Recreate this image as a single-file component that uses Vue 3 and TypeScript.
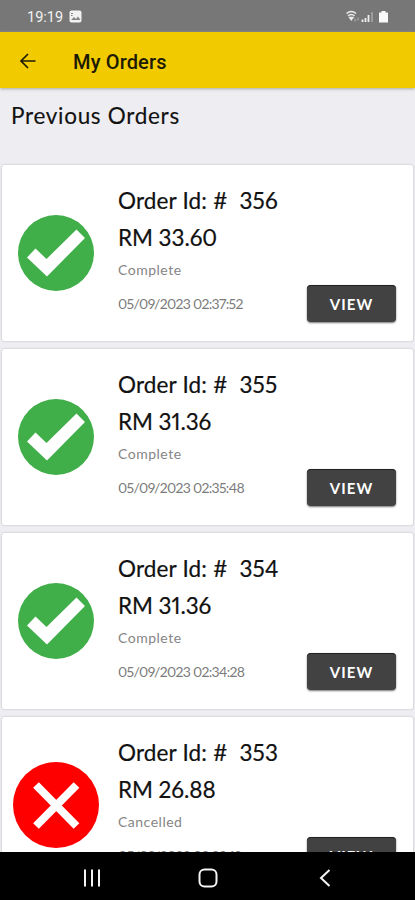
<script setup lang="ts">
interface Order {
  id: number
  total: string
  status: 'Complete' | 'Cancelled'
  date: string
}

const orders: Order[] = [
  { id: 356, total: '33.60', status: 'Complete', date: '05/09/2023 02:37:52' },
  { id: 355, total: '31.36', status: 'Complete', date: '05/09/2023 02:35:48' },
  { id: 354, total: '31.36', status: 'Complete', date: '05/09/2023 02:34:28' },
  { id: 353, total: '26.88', status: 'Cancelled', date: '05/09/2023 02:32:12' },
]
</script>

<template>
  <div class="screen">
    <div class="status">
      <span class="clock">19:19</span>
      <svg class="picture" width="13" height="13" viewBox="0 0 13 13">
        <rect x="0.5" y="0.5" width="12" height="12" rx="2" fill="#f2f2f2" />
        <path d="M2 10 5 7l2 2 2-2.500 2.500 3.500z" fill="#858585" />
        <path d="M2 3.500h2M2 5.500h1.500" stroke="#858585" />
      </svg>
      <svg class="signals" width="46" height="15" viewBox="0 0 46 15">
        <g fill="none" stroke="#ededed" stroke-width="1.400">
          <path d="M1.500 3.500q4.800-4 9.600 0M3 5.800q3.300-2.800 6.600 0" />
        </g>
        <path d="M3.300 6.800h6L6.300 11z" fill="#ededed" />
        <path d="M10 8.500v3M13 7.500v3" stroke="#b5b5b5" />
        <path d="M17.500 12v-2.500M20.500 12V8M23.500 12V5" stroke="#ededed" stroke-width="1.800" />
        <path d="M27 12V2" stroke="#a0a0a0" stroke-width="1.800" />
        <path d="M36.500 1h4v1.500h2.500v10h-9v-10h2.500z" fill="#fafafa" />
      </svg>
    </div>

    <header class="bar">
      <svg width="18" height="18" viewBox="0 0 18 18" fill="none" stroke="#211d05" stroke-width="1.700">
        <path d="M16.500 9H3M9 2 2 9l7 7" />
      </svg>
      <h1>My Orders</h1>
    </header>

    <main class="content">
      <h2>Previous Orders</h2>
      <article v-for="order in orders" :key="order.id" class="card">
        <div class="mark">
          <svg v-if="order.status === 'Complete'" width="76" height="76" viewBox="0 0 76 76">
            <circle cx="38" cy="38" r="38" fill="#40ae49" />
            <path d="M9 42.500 17.500 33.500 28.500 44 58.500 14.500 67 23 29 61.500z" fill="#fff" />
          </svg>
          <svg v-else width="86" height="86" viewBox="0 0 86 86">
            <circle cx="43" cy="43" r="43" fill="#fe0000" />
            <path d="M23 23 63.500 64M63.500 23 23 64" stroke="#fff" stroke-width="8" />
          </svg>
        </div>
        <div class="details">
          <p class="number">Order Id: #&nbsp; {{ order.id }}</p>
          <p class="total">RM {{ order.total }}</p>
          <p class="state">{{ order.status }}</p>
          <p class="date">{{ order.date }}</p>
        </div>
        <button type="button">VIEW</button>
      </article>
    </main>

    <nav class="keys">
      <svg width="18" height="18" viewBox="0 0 18 18" stroke="#f4f4f4" stroke-width="2">
        <path d="M2 0.500v17M9 0.500v17M16 0.500v17" />
      </svg>
      <svg width="20" height="20" viewBox="0 0 20 20" fill="none" stroke="#f4f4f4" stroke-width="2">
        <rect x="1.500" y="1.500" width="17" height="17" rx="5" />
      </svg>
      <svg width="12" height="18" viewBox="0 0 12 18" fill="none" stroke="#f4f4f4" stroke-width="2">
        <path d="M10.500 1 2 9l8.500 8" />
      </svg>
    </nav>
  </div>
</template>

<style>
body {
  margin: 0;
  overflow: hidden;
}
</style>

<style scoped>
.screen {
  display: flex;
  flex-direction: column;
  width: 415px;
  height: 900px;
  overflow: hidden;
  background: #eeedf2;
  font-family: Lato, sans-serif;
  color: #111;
}
h1, h2, p {
  margin: 0;
  font-weight: 400;
  white-space: nowrap;
}
svg {
  display: block;
  flex: none;
}
.status {
  display: flex;
  flex: none;
  box-sizing: border-box;
  height: 32px;
  padding: 9px 24px 0 27px;
  background: #777;
  color: #f2f2f2;
  font: 14.500px/17px Roboto, sans-serif;
}
.clock {
  width: 42px;
}
.picture {
  margin-top: 1px;
}
.signals {
  margin: 1px 0 0 auto;
}
.bar {
  display: flex;
  flex: none;
  align-items: center;
  box-sizing: border-box;
  height: 56px;
  padding: 1px 0 0 19px;
  gap: 36px;
  background: #f1ca00;
  box-shadow: 0 1px 3px #aaa9a0;
  z-index: 1;
}
.bar h1 {
  padding-top: 2px;
  font: 500 20px/24px Roboto, sans-serif;
  letter-spacing: 0.150px;
  color: #1d1a05;
}
.content {
  flex: 1;
  min-height: 0;
  overflow: hidden;
}
h2 {
  height: 63px;
  padding: 14px 11px 0;
  font-size: 22.500px;
  line-height: 28px;
  letter-spacing: 0.700px;
  -webkit-text-stroke: 0.150px;
}
.card {
  display: flex;
  box-sizing: border-box;
  height: 176px;
  margin: 0 2px 8px 2px;
  border-radius: 2px;
  background: #fff;
  box-shadow: 0 0 2px #aaa;
}
.mark {
  display: flex;
  align-items: center;
  justify-content: center;
  width: 108px;
  padding-bottom: 1px;
}
.details {
  flex: 1;
  padding: 22px 0 0 8px;
}
.number, .total {
  height: 37px;
  font-size: 22.500px;
  line-height: 28px;
  font-variant-numeric: proportional-nums;
  -webkit-text-stroke: 0.200px;
}
.number {
  letter-spacing: 0.150px;
}
.total {
  letter-spacing: -0.050px;
}
.state {
  height: 34px;
  box-sizing: border-box;
  color: #858585;
  font-size: 14px;
  line-height: 18px;
  letter-spacing: 0.500px;
}
.date {
  color: #7c7c7c;
  font-size: 14px;
  line-height: 18px;
  font-variant-numeric: proportional-nums;
  letter-spacing: -0.680px;
}
button {
  flex: none;
  align-self: flex-end;
  width: 89px;
  height: 37px;
  margin: 0 17px 19px 0;
  padding: 0;
  border: 0;
  border-radius: 4px;
  background: #424242;
  box-shadow: 0 1px 2px #777, inset 0 1px #222;
  color: #fff;
  font: 700 15px Lato, sans-serif;
  letter-spacing: 1.100px;
}
.keys {
  display: flex;
  flex: none;
  align-items: center;
  justify-content: space-between;
  box-sizing: border-box;
  height: 48px;
  padding: 3px 84px 0 83px;
  background: #000;
}
.keys svg:nth-child(2) {
  margin-right: 5px;
}
</style>
